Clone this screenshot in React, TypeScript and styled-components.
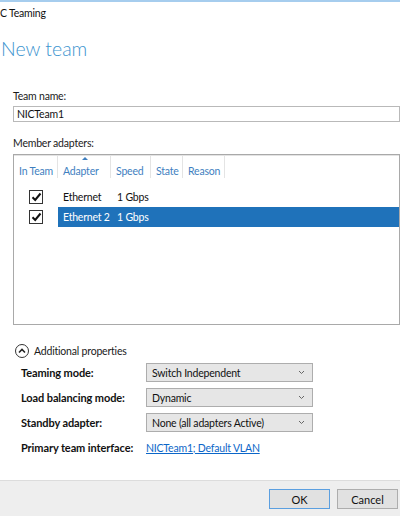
import React from "react";
import styled, { createGlobalStyle } from "styled-components";

const Global = createGlobalStyle`
  html, body { margin: 0; padding: 0; background: #fff; }
  body { font-family: Lato, "Noto Sans", sans-serif; font-size: 10.5px; letter-spacing: -0.2px; color: #1a1a1a; }
  * { box-sizing: border-box; }
`;

const Window = styled.div`
  width: 400px;
  height: 516px;
  display: flex;
  flex-direction: column;
  overflow: hidden;
  border-top: 2px solid #a6cdee;
`;

const TitleBar = styled.div`
  height: 22px;
  line-height: 22px;
  color: #111;
`;

const Heading = styled.h1`
  margin: 13px 0 0 1px;
  font-size: 19.5px;
  font-weight: 300;
  letter-spacing: 0;
  color: #3c94cf;
  line-height: 24px;
`;

const Body = styled.div`
  flex: 1;
  padding-left: 13px;
  display: flex;
  flex-direction: column;
`;

const Label = styled.div<{ $top: number }>`
  margin-top: ${(p) => p.$top}px;
  line-height: 14px;
  height: 14px;
`;

const TextInput = styled.div`
  margin-top: 3px;
  height: 16px;
  width: 387px;
  border: 1px solid #b9b9b9;
  padding-left: 3px;
  line-height: 14px;
  color: #111;
`;

const ListBox = styled.div`
  margin-top: 4px;
  width: 387px;
  height: 171px;
  border: 1px solid #a9a9a9;
  display: flex;
  flex-direction: column;
`;

const HeaderRow = styled.div`
  display: flex;
  height: 23px;
  border-top: 1px solid #e3e3e3;
`;

const HeaderCell = styled.div<{ $w: number }>`
  position: relative;
  width: ${(p) => p.$w}px;
  border-right: 1px solid #e4e4e4;
  padding: 8px 0 0 5px;
  color: #3f7fbf;
  line-height: 14px;
  white-space: nowrap;
`;

const SortArrow = styled.span`
  position: absolute;
  top: 1px;
  left: 24px;
  width: 0;
  height: 0;
  border-left: 3px solid transparent;
  border-right: 3px solid transparent;
  border-bottom: 3px solid #3f7fbf;
`;

const Rows = styled.div`
  margin-top: 9px;
  display: flex;
  flex-direction: column;
`;

const Row = styled.div`
  display: flex;
  height: 20px;
`;

const CheckCell = styled.div`
  width: 44px;
  display: flex;
  align-items: center;
  justify-content: center;
`;

const RowData = styled.div<{ $selected?: boolean }>`
  flex: 1;
  display: flex;
  align-items: center;
  background: ${(p) => (p.$selected ? "#1f72ba" : "transparent")};
  color: ${(p) => (p.$selected ? "#fff" : "#111")};
`;

const DataCell = styled.div<{ $w: number }>`
  width: ${(p) => p.$w}px;
  padding-left: 5px;
  white-space: nowrap;
`;

const Box = styled.span`
  width: 14px;
  height: 14px;
  border: 1px solid #333;
  background: #fff;
  display: flex;
  align-items: center;
  justify-content: center;
`;

const Expander = styled.div`
  margin-top: 18px;
  margin-left: 2px;
  display: flex;
  align-items: center;
  gap: 5px;
  height: 16px;
  color: #1a1a1a;
`;

const Circle = styled.span`
  width: 14px;
  height: 14px;
  border: 1px solid #333;
  border-radius: 50%;
  display: flex;
  align-items: center;
  justify-content: center;
`;

const PropGrid = styled.div`
  margin-top: 1px;
  margin-left: 8px;
  display: grid;
  grid-template-columns: 125px 167px;
  grid-auto-rows: 25px;
  align-items: center;
`;

const PropLabel = styled.div`
  font-weight: 700;
  font-size: 11px;
  letter-spacing: -0.1px;
  color: #111;
`;

const Select = styled.div`
  height: 19px;
  border: 1px solid #adadad;
  background: #e6e6e6;
  display: flex;
  align-items: center;
  justify-content: space-between;
  padding: 0 7px 0 5px;
  color: #111;
`;

const Link = styled.a`
  color: #0b66c8;
  text-decoration: underline;
  cursor: pointer;
`;

const Footer = styled.div`
  height: 36px;
  border-top: 1px solid #dcdcdc;
  background: #eeeeee;
  display: flex;
  justify-content: flex-end;
  align-items: flex-start;
  gap: 7px;
  padding: 8px 2px 0 0;
`;

const Button = styled.button<{ $focus?: boolean }>`
  width: 61px;
  height: 20px;
  font-family: inherit;
  font-size: 11px;
  color: #111;
  background: #e1e1e1;
  border: 1px solid ${(p) => (p.$focus ? "#5b9fe0" : "#adadad")};
  padding: 0;
`;

const Check = () => (
  <Box>
    <svg width="11" height="10" viewBox="0 0 11 10">
      <path d="M1.5 5.2 L4.2 8 L9.5 1.5" fill="none" stroke="#111" strokeWidth="2" />
    </svg>
  </Box>
);

const Chevron = () => (
  <svg width="7" height="5" viewBox="0 0 7 5">
    <path d="M1 1 L3.5 3.5 L6 1" fill="none" stroke="#666" strokeWidth="1" />
  </svg>
);

const rows = [
  { name: "Ethernet", speed: "1 Gbps", selected: false },
  { name: "Ethernet 2", speed: "1 Gbps", selected: true },
];

export default function App() {
  return (
    <>
      <Global />
      <Window>
        <TitleBar>C Teaming</TitleBar>
        <Heading>New team</Heading>
        <Body>
          <Label $top={28}>Team name:</Label>
          <TextInput>NICTeam1</TextInput>
          <Label $top={14}>Member adapters:</Label>
          <ListBox>
            <HeaderRow>
              <HeaderCell $w={44}>In Team</HeaderCell>
              <HeaderCell $w={53}>
                <SortArrow />
                Adapter
              </HeaderCell>
              <HeaderCell $w={40}>Speed</HeaderCell>
              <HeaderCell $w={32}>State</HeaderCell>
              <HeaderCell $w={42}>Reason</HeaderCell>
            </HeaderRow>
            <Rows>
              {rows.map((r) => (
                <Row key={r.name}>
                  <CheckCell>
                    <Check />
                  </CheckCell>
                  <RowData $selected={r.selected}>
                    <DataCell $w={54}>{r.name}</DataCell>
                    <DataCell $w={60}>{r.speed}</DataCell>
                  </RowData>
                </Row>
              ))}
            </Rows>
          </ListBox>
          <Expander>
            <Circle>
              <svg width="8" height="6" viewBox="0 0 8 6">
                <path d="M1 4.5 L4 1.5 L7 4.5" fill="none" stroke="#222" strokeWidth="1.6" />
              </svg>
            </Circle>
            Additional properties
          </Expander>
          <PropGrid>
            <PropLabel>Teaming mode:</PropLabel>
            <Select>
              Switch Independent <Chevron />
            </Select>
            <PropLabel>Load balancing mode:</PropLabel>
            <Select>
              Dynamic <Chevron />
            </Select>
            <PropLabel>Standby adapter:</PropLabel>
            <Select>
              None (all adapters Active) <Chevron />
            </Select>
            <PropLabel>Primary team interface:</PropLabel>
            <div>
              <Link>NICTeam1; Default VLAN</Link>
            </div>
          </PropGrid>
        </Body>
        <Footer>
          <Button $focus>OK</Button>
          <Button>Cancel</Button>
        </Footer>
      </Window>
    </>
  );
}
